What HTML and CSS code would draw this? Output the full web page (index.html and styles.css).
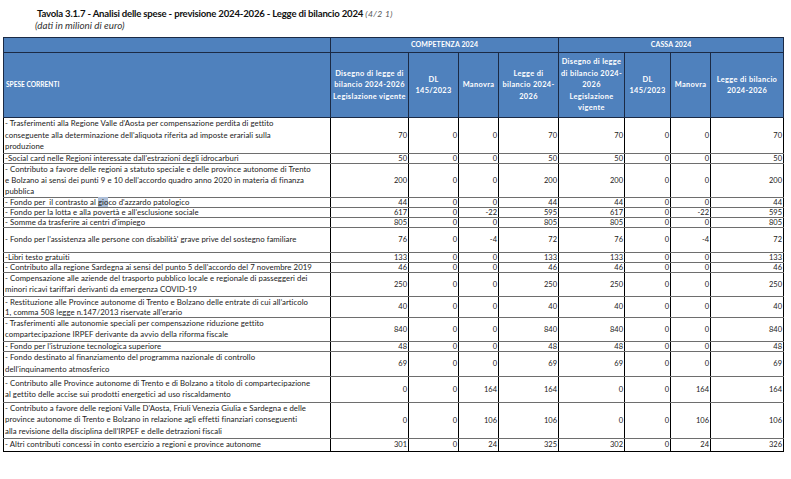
FILE: index.html
```html
<!DOCTYPE html>
<html lang="it">
<head>
<meta charset="utf-8">
<title>Tavola 3.1.7</title>
<link rel="stylesheet" href="styles.css">
</head>
<body>
<div class="page">
  <div class="caption">
    <div class="title">Tavola 3.1.7 - Analisi delle spese - previsione 2024-2026 - Legge di bilancio 2024 <span class="ref">(4/2 1)</span></div>
    <div class="subtitle">(dati in milioni di euro)</div>
  </div>
  <table class="grid">
    <colgroup>
      <col class="c-desc"><col class="c-a"><col class="c-b"><col class="c-c"><col class="c-d">
      <col class="c-e"><col class="c-f"><col class="c-g"><col class="c-h">
    </colgroup>
    <thead>
      <tr class="hg">
        <th class="blank"></th>
        <th colspan="4" class="grp">COMPETENZA 2024</th>
        <th colspan="4" class="grp">CASSA 2024</th>
      </tr>
      <tr class="hc">
        <th class="lbl">SPESE CORRENTI</th>
        <th>Disegno di legge di<br>bilancio 2024-2026<br>Legislazione vigente</th>
        <th>DL<br>145/2023</th>
        <th>Manovra</th>
        <th>Legge di<br>bilancio 2024-<br>2026</th>
        <th>Disegno di legge<br>di bilancio 2024-<br>2026<br>Legislazione<br>vigente</th>
        <th>DL<br>145/2023</th>
        <th>Manovra</th>
        <th>Legge di bilancio<br>2024-2026</th>
      </tr>
    </thead>
    <tbody>
      <tr class="r35"><td class="d">- Trasferimenti alla Regione Valle d'Aosta per compensazione perdita di gettito<br>conseguente alla determinazione dell'aliquota riferita ad imposte erariali sulla<br>produzione</td><td>70</td><td>0</td><td>0</td><td>70</td><td>70</td><td>0</td><td>0</td><td>70</td></tr>
      <tr class="r10"><td class="d">-Social card nelle Regioni interessate dall'estrazioni degli idrocarburi</td><td>50</td><td>0</td><td>0</td><td>50</td><td>50</td><td>0</td><td>0</td><td>50</td></tr>
      <tr class="r32"><td class="d">- Contributo a favore delle regioni a statuto speciale e delle province autonome di Trento<br>e Bolzano ai sensi dei punti 9 e 10 dell'accordo quadro anno 2020 in materia di finanza<br>pubblica</td><td>200</td><td>0</td><td>0</td><td>200</td><td>200</td><td>0</td><td>0</td><td>200</td></tr>
      <tr class="r10"><td class="d">- Fondo per&nbsp; il contrasto al <span class="sel">gio</span>co d'azzardo patologico</td><td>44</td><td>0</td><td>0</td><td>44</td><td>44</td><td>0</td><td>0</td><td>44</td></tr>
      <tr class="r10"><td class="d">- Fondo per la lotta e alla povertà e all'esclusione sociale</td><td>617</td><td>0</td><td>-22</td><td>595</td><td>617</td><td>0</td><td>-22</td><td>595</td></tr>
      <tr class="r10"><td class="d">- Somme da trasferire ai centri d'impiego</td><td>805</td><td>0</td><td>0</td><td>805</td><td>805</td><td>0</td><td>0</td><td>805</td></tr>
      <tr class="r25"><td class="d">- Fondo per l'assistenza alle persone con disabilità' grave prive del sostegno familiare</td><td>76</td><td>0</td><td>-4</td><td>72</td><td>76</td><td>0</td><td>-4</td><td>72</td></tr>
      <tr class="r10"><td class="d">-Libri testo gratuiti</td><td>133</td><td>0</td><td>0</td><td>133</td><td>133</td><td>0</td><td>0</td><td>133</td></tr>
      <tr class="r10"><td class="d">- Contributo alla regione Sardegna ai sensi del punto 5 dell'accordo del 7 novembre 2019</td><td>46</td><td>0</td><td>0</td><td>46</td><td>46</td><td>0</td><td>0</td><td>46</td></tr>
      <tr class="r23"><td class="d">- Compensazione alle aziende del trasporto pubblico locale e regionale di passeggeri dei<br>minori ricavi tariffari derivanti da emergenza COVID-19</td><td>250</td><td>0</td><td>0</td><td>250</td><td>250</td><td>0</td><td>0</td><td>250</td></tr>
      <tr class="r21"><td class="d">- Restituzione alle Province autonome di Trento e Bolzano delle entrate di cui all’articolo<br>1, comma 508 legge n.147/2013 riservate all’erario</td><td>40</td><td>0</td><td>0</td><td>40</td><td>40</td><td>0</td><td>0</td><td>40</td></tr>
      <tr class="r24"><td class="d">- Trasferimenti alle autonomie speciali per compensazione riduzione gettito<br>compartecipazione IRPEF derivante da avvio della riforma fiscale</td><td>840</td><td>0</td><td>0</td><td>840</td><td>840</td><td>0</td><td>0</td><td>840</td></tr>
      <tr class="r10"><td class="d">- Fondo per l'istruzione tecnologica superiore</td><td>48</td><td>0</td><td>0</td><td>48</td><td>48</td><td>0</td><td>0</td><td>48</td></tr>
      <tr class="r25"><td class="d">- Fondo destinato al finanziamento del programma nazionale di controllo<br>dell'inquinamento atmosferico</td><td>69</td><td>0</td><td>0</td><td>69</td><td>69</td><td>0</td><td>0</td><td>69</td></tr>
      <tr class="r26"><td class="d">- Contributo alle Province autonome di Trento e di Bolzano a titolo di compartecipazione<br>al gettito delle accise sui prodotti energetici ad uso riscaldamento</td><td>0</td><td>0</td><td>164</td><td>164</td><td>0</td><td>0</td><td>164</td><td>164</td></tr>
      <tr class="r36"><td class="d">- Contributo a favore delle regioni Valle D'Aosta, Friuli Venezia Giulia e Sardegna e delle<br>province autonome di Trento e Bolzano in relazione agli effetti finanziari conseguenti<br>alla revisione della disciplina dell'IRPEF e delle detrazioni fiscali</td><td>0</td><td>0</td><td>106</td><td>106</td><td>0</td><td>0</td><td>106</td><td>106</td></tr>
      <tr class="r13"><td class="d">- Altri contributi concessi in conto esercizio a regioni e province autonome</td><td>301</td><td>0</td><td>24</td><td>325</td><td>302</td><td>0</td><td>24</td><td>326</td></tr>
    </tbody>
  </table>
</div>
</body>
</html>
```
FILE: styles.css
```css
html, body {
  margin: 0;
  padding: 0;
  background: #ffffff;
}

.page {
  padding: 8px 0 0 3px;
  font-family: Lato, "Liberation Sans", sans-serif;
  color: #1d1d1d;
}

.caption {
  padding-left: 34px;
  height: 29px;
}

.title {
  font-weight: 700;
  font-size: 9.6px;
  line-height: 12px;
  letter-spacing: -0.2px;
  color: #111;
  white-space: nowrap;
}

.title .ref {
  font-weight: 400;
  font-style: italic;
  font-size: 8.5px;
  color: #555;
  letter-spacing: 0.4px;
}

.subtitle {
  font-style: italic;
  font-size: 9.8px;
  line-height: 10px;
  color: #333;
  margin-left: -2px;
}

.grid {
  border-collapse: collapse;
  table-layout: fixed;
  width: 780px;
}

.c-desc { width: 327px; }
.c-a { width: 78px; }
.c-b { width: 50px; }
.c-c { width: 40px; }
.c-d { width: 60px; }
.c-e { width: 66px; }
.c-f { width: 46px; }
.c-g { width: 40px; }
.c-h { width: 73px; }

.grid th {
  background: #4f81bd;
  color: #ffffff;
  font-weight: 700;
  font-size: 7.4px;
  letter-spacing: 0.35px;
  line-height: 11.5px;
  padding: 0;
  border: 1px solid #1b2a45;
  text-align: center;
  vertical-align: middle;
  white-space: nowrap;
}

.grid th.grp {
  font-size: 7px;
  letter-spacing: 0.1px;
}

.hg th { height: 14px; }
.hc th { height: 64px; }
.grid th.lbl {
  text-align: left;
  padding-left: 2px;
  font-size: 6.6px;
  letter-spacing: 0;
}

.grid td {
  font-size: 7.5px;
  line-height: 9px;
  padding: 0 1px 0 0;
  text-align: right;
  vertical-align: middle;
  white-space: nowrap;
  border-left: 1px solid #000;
  border-right: 1px solid #000;
  border-top: 1px solid #6e6e6e;
  border-bottom: 1px solid #6e6e6e;
  color: #222;
}

.grid td.d {
  text-align: left;
  padding-left: 1px;
  font-size: 7.8px;
  letter-spacing: 0.05px;
  line-height: 11.5px;
}

.sel { background: #aebfd8; }

.r10 td { height: 9px; line-height: 9px; }
.r10 td.d { line-height: 9px; }
.r13 td { height: 12px; }
.r21 td { height: 20px; }
.r21 td.d { line-height: 10px; }
.r23 td { height: 22px; }
.r24 td { height: 23px; }
.r25 td { height: 24px; }
.r26 td { height: 25px; }
.r32 td { height: 31px; }
.r32 td.d { line-height: 11px; }
.r35 td { height: 34px; }
.r36 td { height: 35px; }

.grid tbody tr:last-child td { border-bottom: 1px solid #000; }
```
